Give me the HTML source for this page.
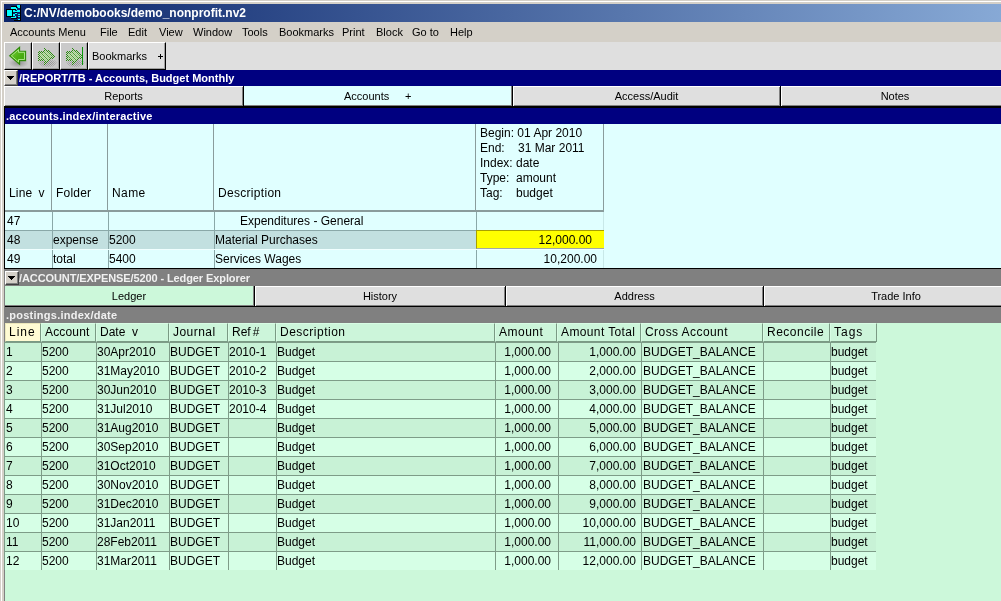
<!DOCTYPE html>
<html><head><meta charset="utf-8">
<style>
*{margin:0;padding:0;box-sizing:border-box}
html,body{width:1001px;height:601px;overflow:hidden;background:#D4D0C8;font-family:"Liberation Sans",sans-serif;position:relative}
.a{position:absolute}
.t{position:absolute;white-space:pre;line-height:1;color:#000;will-change:transform}
</style></head><body>
<div class="a" style="left:1px;top:1px;width:1000px;height:1px;background:#fff"></div>
<div class="a" style="left:1px;top:1px;width:1px;height:600px;background:#fff"></div>
<div class="a" style="left:4px;top:4px;width:1245px;height:18px;background:linear-gradient(to right,#0A246A,#A6CAF0)"></div>
<div class="t" style="left:24px;top:7px;font-size:12px;font-weight:bold;color:#fff">C:/NV/demobooks/demo_nonprofit.nv2</div>
<svg class="a" style="left:4px;top:4px" width="18" height="18" viewBox="0 0 18 18" shape-rendering="crispEdges">
<path fill="#000" d="M2 5h7v8h-7zM7 2h6v1h-6zM12 3h1v3h-1zM9 5h4v1h-4zM8 6h1v7h-1zM11 8h2v2h-2zM7 14h6v1h-6zM13 13h1v1h-1zM16 1h1v16h-1zM10 16h7v1h-7z"/>
<path fill="#0ff" d="M3 6h5v6h-5zM7 3h5v2h-5zM13 1h3v2h-3zM14 3h2v1h-2zM12 4h1v2h-1zM9 6h2v2h-2zM10 7h3v1h-3zM11 9h2v1h-2zM9 10h2v2h-2zM13 6h3v2h-3zM14 10h2v1h-2zM14 12h2v1h-2zM7 13h4v1h-4zM11 12h1v2h-1zM14 15h2v1h-2z"/>
</svg>
<div class="t" style="left:10px;top:27px;font-size:11px">Accounts Menu</div>
<div class="t" style="left:100px;top:27px;font-size:11px">File</div>
<div class="t" style="left:128px;top:27px;font-size:11px">Edit</div>
<div class="t" style="left:159px;top:27px;font-size:11px">View</div>
<div class="t" style="left:193px;top:27px;font-size:11px">Window</div>
<div class="t" style="left:242px;top:27px;font-size:11px">Tools</div>
<div class="t" style="left:279px;top:27px;font-size:11px">Bookmarks</div>
<div class="t" style="left:342px;top:27px;font-size:11px">Print</div>
<div class="t" style="left:376px;top:27px;font-size:11px">Block</div>
<div class="t" style="left:412px;top:27px;font-size:11px">Go to</div>
<div class="t" style="left:450px;top:27px;font-size:11px">Help</div>
<div class="a" style="left:4px;top:42px;width:997px;height:28px;background:#DFDFDF"></div>
<div class="a" style="left:4px;top:42px;width:28px;height:28px;background:#CACACA;border-top:1px solid #fff;border-left:1px solid #fff;border-right:1px solid #000;border-bottom:1px solid #000;box-shadow:inset -1px -1px 0 #a0a0a0"></div>
<div class="a" style="left:32px;top:42px;width:28px;height:28px;background:#CACACA;border-top:1px solid #fff;border-left:1px solid #fff;border-right:1px solid #000;border-bottom:1px solid #000;box-shadow:inset -1px -1px 0 #a0a0a0"></div>
<div class="a" style="left:60px;top:42px;width:28px;height:28px;background:#CACACA;border-top:1px solid #fff;border-left:1px solid #fff;border-right:1px solid #000;border-bottom:1px solid #000;box-shadow:inset -1px -1px 0 #a0a0a0"></div>
<div class="a" style="left:88px;top:42px;width:78px;height:28px;background:#DFDFDF;border-top:1px solid #fff;border-left:1px solid #fff;border-right:1px solid #000;border-bottom:1px solid #000;box-shadow:inset -1px -1px 0 #a0a0a0"></div>
<div class="t" style="left:92px;top:51px;font-size:11px">Bookmarks</div>
<div class="a" style="left:158px;top:56px;width:5px;height:1px;background:#000"></div>
<div class="a" style="left:160px;top:54px;width:1px;height:5px;background:#000"></div>
<svg class="a" style="left:4px;top:42px" width="28" height="28" viewBox="0 0 28 28">
<defs><linearGradient id="ga" x1="0" y1="0" x2="1" y2="1"><stop offset="0" stop-color="#7CD040"/><stop offset=".55" stop-color="#4CB012"/><stop offset="1" stop-color="#3C9C0C"/></linearGradient>
<radialGradient id="sh"><stop offset="0" stop-color="#000" stop-opacity=".28"/><stop offset="1" stop-color="#000" stop-opacity="0"/></radialGradient></defs>
<ellipse cx="14.5" cy="21" rx="10" ry="5" fill="url(#sh)"/>
<path d="M5.6 13.8 L15.6 5.3 L15.6 9.3 L21.6 9.3 L21.6 18.6 L15.6 18.6 L15.6 22.4 Z" fill="url(#ga)" stroke="#2F8A0A" stroke-width="1.1" stroke-linejoin="miter"/>
<path d="M7.4 13.8 L14.5 7.7 L14.5 10.3 L20.5 10.3 L20.5 17.5 L14.5 17.5 L14.5 20 Z" fill="none" stroke="#B0EA90" stroke-width=".9"/>
</svg>
<svg class="a" style="left:32px;top:42px" width="28" height="28" viewBox="0 0 28 28" shape-rendering="crispEdges"><rect x="19" y="17" width="1" height="1" fill="#000" fill-opacity="0.10"/><rect x="18" y="18" width="1" height="1" fill="#000" fill-opacity="0.20"/><rect x="20" y="18" width="1" height="1" fill="#000" fill-opacity="0.15"/><rect x="22" y="18" width="1" height="1" fill="#000" fill-opacity="0.09"/><rect x="7" y="19" width="1" height="1" fill="#000" fill-opacity="0.09"/><rect x="9" y="19" width="1" height="1" fill="#000" fill-opacity="0.17"/><rect x="11" y="19" width="1" height="1" fill="#000" fill-opacity="0.23"/><rect x="17" y="19" width="1" height="1" fill="#000" fill-opacity="0.26"/><rect x="19" y="19" width="1" height="1" fill="#000" fill-opacity="0.23"/><rect x="21" y="19" width="1" height="1" fill="#000" fill-opacity="0.17"/><rect x="23" y="19" width="1" height="1" fill="#000" fill-opacity="0.09"/><rect x="6" y="20" width="1" height="1" fill="#000" fill-opacity="0.07"/><rect x="8" y="20" width="1" height="1" fill="#000" fill-opacity="0.16"/><rect x="10" y="20" width="1" height="1" fill="#000" fill-opacity="0.23"/><rect x="16" y="20" width="1" height="1" fill="#000" fill-opacity="0.29"/><rect x="18" y="20" width="1" height="1" fill="#000" fill-opacity="0.27"/><rect x="20" y="20" width="1" height="1" fill="#000" fill-opacity="0.23"/><rect x="22" y="20" width="1" height="1" fill="#000" fill-opacity="0.16"/><rect x="24" y="20" width="1" height="1" fill="#000" fill-opacity="0.07"/><rect x="7" y="21" width="1" height="1" fill="#000" fill-opacity="0.12"/><rect x="9" y="21" width="1" height="1" fill="#000" fill-opacity="0.20"/><rect x="11" y="21" width="1" height="1" fill="#000" fill-opacity="0.25"/><rect x="15" y="21" width="1" height="1" fill="#000" fill-opacity="0.30"/><rect x="17" y="21" width="1" height="1" fill="#000" fill-opacity="0.29"/><rect x="19" y="21" width="1" height="1" fill="#000" fill-opacity="0.25"/><rect x="21" y="21" width="1" height="1" fill="#000" fill-opacity="0.20"/><rect x="23" y="21" width="1" height="1" fill="#000" fill-opacity="0.12"/><rect x="8" y="22" width="1" height="1" fill="#000" fill-opacity="0.14"/><rect x="10" y="22" width="1" height="1" fill="#000" fill-opacity="0.20"/><rect x="14" y="22" width="1" height="1" fill="#000" fill-opacity="0.27"/><rect x="16" y="22" width="1" height="1" fill="#000" fill-opacity="0.27"/><rect x="18" y="22" width="1" height="1" fill="#000" fill-opacity="0.25"/><rect x="20" y="22" width="1" height="1" fill="#000" fill-opacity="0.20"/><rect x="22" y="22" width="1" height="1" fill="#000" fill-opacity="0.14"/><rect x="9" y="23" width="1" height="1" fill="#000" fill-opacity="0.12"/><rect x="11" y="23" width="1" height="1" fill="#000" fill-opacity="0.18"/><rect x="13" y="23" width="1" height="1" fill="#000" fill-opacity="0.21"/><rect x="15" y="23" width="1" height="1" fill="#000" fill-opacity="0.22"/><rect x="17" y="23" width="1" height="1" fill="#000" fill-opacity="0.21"/><rect x="19" y="23" width="1" height="1" fill="#000" fill-opacity="0.18"/><rect x="21" y="23" width="1" height="1" fill="#000" fill-opacity="0.12"/><rect x="10" y="24" width="1" height="1" fill="#000" fill-opacity="0.08"/><rect x="12" y="24" width="1" height="1" fill="#000" fill-opacity="0.12"/><rect x="14" y="24" width="1" height="1" fill="#000" fill-opacity="0.15"/><rect x="16" y="24" width="1" height="1" fill="#000" fill-opacity="0.15"/><rect x="18" y="24" width="1" height="1" fill="#000" fill-opacity="0.12"/><rect x="20" y="24" width="1" height="1" fill="#000" fill-opacity="0.08"/><rect x="12" y="6" width="1" height="1" fill="#2C8C10"/><rect x="13" y="7" width="1" height="1" fill="#2C8C10"/><rect x="12" y="8" width="1" height="1" fill="#2C8C10"/><rect x="14" y="8" width="1" height="1" fill="#2C8C10"/><rect x="16" y="8" width="1" height="1" fill="#2C8C10"/><rect x="7" y="9" width="1" height="1" fill="#2C8C10"/><rect x="9" y="9" width="1" height="1" fill="#2C8C10"/><rect x="11" y="9" width="1" height="1" fill="#2C8C10"/><rect x="13" y="9" width="1" height="1" fill="#98E070"/><rect x="15" y="9" width="1" height="1" fill="#2C8C10"/><rect x="17" y="9" width="1" height="1" fill="#2C8C10"/><rect x="6" y="10" width="1" height="1" fill="#2C8C10"/><rect x="8" y="10" width="1" height="1" fill="#2C8C10"/><rect x="10" y="10" width="1" height="1" fill="#2C8C10"/><rect x="12" y="10" width="1" height="1" fill="#4AB02A"/><rect x="14" y="10" width="1" height="1" fill="#98E070"/><rect x="16" y="10" width="1" height="1" fill="#4AB02A"/><rect x="18" y="10" width="1" height="1" fill="#2C8C10"/><rect x="7" y="11" width="1" height="1" fill="#2C8C10"/><rect x="9" y="11" width="1" height="1" fill="#4AB02A"/><rect x="11" y="11" width="1" height="1" fill="#98E070"/><rect x="13" y="11" width="1" height="1" fill="#4AB02A"/><rect x="15" y="11" width="1" height="1" fill="#98E070"/><rect x="17" y="11" width="1" height="1" fill="#4AB02A"/><rect x="19" y="11" width="1" height="1" fill="#2C8C10"/><rect x="6" y="12" width="1" height="1" fill="#2C8C10"/><rect x="8" y="12" width="1" height="1" fill="#98E070"/><rect x="10" y="12" width="1" height="1" fill="#4AB02A"/><rect x="12" y="12" width="1" height="1" fill="#98E070"/><rect x="14" y="12" width="1" height="1" fill="#4AB02A"/><rect x="16" y="12" width="1" height="1" fill="#98E070"/><rect x="18" y="12" width="1" height="1" fill="#4AB02A"/><rect x="20" y="12" width="1" height="1" fill="#2C8C10"/><rect x="7" y="13" width="1" height="1" fill="#2C8C10"/><rect x="9" y="13" width="1" height="1" fill="#98E070"/><rect x="11" y="13" width="1" height="1" fill="#4AB02A"/><rect x="13" y="13" width="1" height="1" fill="#98E070"/><rect x="15" y="13" width="1" height="1" fill="#4AB02A"/><rect x="17" y="13" width="1" height="1" fill="#98E070"/><rect x="19" y="13" width="1" height="1" fill="#4AB02A"/><rect x="21" y="13" width="1" height="1" fill="#2C8C10"/><rect x="6" y="14" width="1" height="1" fill="#2C8C10"/><rect x="8" y="14" width="1" height="1" fill="#4AB02A"/><rect x="10" y="14" width="1" height="1" fill="#98E070"/><rect x="12" y="14" width="1" height="1" fill="#4AB02A"/><rect x="14" y="14" width="1" height="1" fill="#98E070"/><rect x="16" y="14" width="1" height="1" fill="#4AB02A"/><rect x="18" y="14" width="1" height="1" fill="#98E070"/><rect x="20" y="14" width="1" height="1" fill="#4AB02A"/><rect x="22" y="14" width="1" height="1" fill="#2C8C10"/><rect x="7" y="15" width="1" height="1" fill="#2C8C10"/><rect x="9" y="15" width="1" height="1" fill="#4AB02A"/><rect x="11" y="15" width="1" height="1" fill="#98E070"/><rect x="13" y="15" width="1" height="1" fill="#4AB02A"/><rect x="15" y="15" width="1" height="1" fill="#98E070"/><rect x="17" y="15" width="1" height="1" fill="#4AB02A"/><rect x="19" y="15" width="1" height="1" fill="#2C8C10"/><rect x="21" y="15" width="1" height="1" fill="#2C8C10"/><rect x="6" y="16" width="1" height="1" fill="#2C8C10"/><rect x="8" y="16" width="1" height="1" fill="#98E070"/><rect x="10" y="16" width="1" height="1" fill="#4AB02A"/><rect x="12" y="16" width="1" height="1" fill="#98E070"/><rect x="14" y="16" width="1" height="1" fill="#4AB02A"/><rect x="16" y="16" width="1" height="1" fill="#98E070"/><rect x="18" y="16" width="1" height="1" fill="#2C8C10"/><rect x="20" y="16" width="1" height="1" fill="#2C8C10"/><rect x="7" y="17" width="1" height="1" fill="#2C8C10"/><rect x="9" y="17" width="1" height="1" fill="#2C8C10"/><rect x="11" y="17" width="1" height="1" fill="#2C8C10"/><rect x="13" y="17" width="1" height="1" fill="#98E070"/><rect x="15" y="17" width="1" height="1" fill="#4AB02A"/><rect x="17" y="17" width="1" height="1" fill="#2C8C10"/><rect x="6" y="18" width="1" height="1" fill="#2C8C10"/><rect x="8" y="18" width="1" height="1" fill="#2C8C10"/><rect x="10" y="18" width="1" height="1" fill="#2C8C10"/><rect x="12" y="18" width="1" height="1" fill="#4AB02A"/><rect x="14" y="18" width="1" height="1" fill="#98E070"/><rect x="16" y="18" width="1" height="1" fill="#2C8C10"/><rect x="13" y="19" width="1" height="1" fill="#2C8C10"/><rect x="15" y="19" width="1" height="1" fill="#2C8C10"/><rect x="12" y="20" width="1" height="1" fill="#2C8C10"/><rect x="14" y="20" width="1" height="1" fill="#2C8C10"/><rect x="13" y="21" width="1" height="1" fill="#2C8C10"/><rect x="12" y="22" width="1" height="1" fill="#2C8C10"/></svg>
<svg class="a" style="left:60px;top:42px" width="28" height="28" viewBox="0 0 28 28" shape-rendering="crispEdges"><rect x="19" y="17" width="1" height="1" fill="#000" fill-opacity="0.10"/><rect x="18" y="18" width="1" height="1" fill="#000" fill-opacity="0.20"/><rect x="20" y="18" width="1" height="1" fill="#000" fill-opacity="0.15"/><rect x="22" y="18" width="1" height="1" fill="#000" fill-opacity="0.09"/><rect x="7" y="19" width="1" height="1" fill="#000" fill-opacity="0.09"/><rect x="9" y="19" width="1" height="1" fill="#000" fill-opacity="0.17"/><rect x="11" y="19" width="1" height="1" fill="#000" fill-opacity="0.23"/><rect x="17" y="19" width="1" height="1" fill="#000" fill-opacity="0.26"/><rect x="19" y="19" width="1" height="1" fill="#000" fill-opacity="0.23"/><rect x="21" y="19" width="1" height="1" fill="#000" fill-opacity="0.17"/><rect x="23" y="19" width="1" height="1" fill="#000" fill-opacity="0.09"/><rect x="6" y="20" width="1" height="1" fill="#000" fill-opacity="0.07"/><rect x="8" y="20" width="1" height="1" fill="#000" fill-opacity="0.16"/><rect x="10" y="20" width="1" height="1" fill="#000" fill-opacity="0.23"/><rect x="16" y="20" width="1" height="1" fill="#000" fill-opacity="0.29"/><rect x="18" y="20" width="1" height="1" fill="#000" fill-opacity="0.27"/><rect x="20" y="20" width="1" height="1" fill="#000" fill-opacity="0.23"/><rect x="22" y="20" width="1" height="1" fill="#000" fill-opacity="0.16"/><rect x="24" y="20" width="1" height="1" fill="#000" fill-opacity="0.07"/><rect x="7" y="21" width="1" height="1" fill="#000" fill-opacity="0.12"/><rect x="9" y="21" width="1" height="1" fill="#000" fill-opacity="0.20"/><rect x="11" y="21" width="1" height="1" fill="#000" fill-opacity="0.25"/><rect x="15" y="21" width="1" height="1" fill="#000" fill-opacity="0.30"/><rect x="17" y="21" width="1" height="1" fill="#000" fill-opacity="0.29"/><rect x="19" y="21" width="1" height="1" fill="#000" fill-opacity="0.25"/><rect x="21" y="21" width="1" height="1" fill="#000" fill-opacity="0.20"/><rect x="23" y="21" width="1" height="1" fill="#000" fill-opacity="0.12"/><rect x="8" y="22" width="1" height="1" fill="#000" fill-opacity="0.14"/><rect x="10" y="22" width="1" height="1" fill="#000" fill-opacity="0.20"/><rect x="14" y="22" width="1" height="1" fill="#000" fill-opacity="0.27"/><rect x="16" y="22" width="1" height="1" fill="#000" fill-opacity="0.27"/><rect x="18" y="22" width="1" height="1" fill="#000" fill-opacity="0.25"/><rect x="20" y="22" width="1" height="1" fill="#000" fill-opacity="0.20"/><rect x="22" y="22" width="1" height="1" fill="#000" fill-opacity="0.14"/><rect x="9" y="23" width="1" height="1" fill="#000" fill-opacity="0.12"/><rect x="11" y="23" width="1" height="1" fill="#000" fill-opacity="0.18"/><rect x="13" y="23" width="1" height="1" fill="#000" fill-opacity="0.21"/><rect x="15" y="23" width="1" height="1" fill="#000" fill-opacity="0.22"/><rect x="17" y="23" width="1" height="1" fill="#000" fill-opacity="0.21"/><rect x="19" y="23" width="1" height="1" fill="#000" fill-opacity="0.18"/><rect x="21" y="23" width="1" height="1" fill="#000" fill-opacity="0.12"/><rect x="10" y="24" width="1" height="1" fill="#000" fill-opacity="0.08"/><rect x="12" y="24" width="1" height="1" fill="#000" fill-opacity="0.12"/><rect x="14" y="24" width="1" height="1" fill="#000" fill-opacity="0.15"/><rect x="16" y="24" width="1" height="1" fill="#000" fill-opacity="0.15"/><rect x="18" y="24" width="1" height="1" fill="#000" fill-opacity="0.12"/><rect x="20" y="24" width="1" height="1" fill="#000" fill-opacity="0.08"/><rect x="12" y="6" width="1" height="1" fill="#2C8C10"/><rect x="13" y="7" width="1" height="1" fill="#2C8C10"/><rect x="12" y="8" width="1" height="1" fill="#2C8C10"/><rect x="14" y="8" width="1" height="1" fill="#2C8C10"/><rect x="16" y="8" width="1" height="1" fill="#2C8C10"/><rect x="7" y="9" width="1" height="1" fill="#2C8C10"/><rect x="9" y="9" width="1" height="1" fill="#2C8C10"/><rect x="11" y="9" width="1" height="1" fill="#2C8C10"/><rect x="13" y="9" width="1" height="1" fill="#98E070"/><rect x="15" y="9" width="1" height="1" fill="#2C8C10"/><rect x="17" y="9" width="1" height="1" fill="#2C8C10"/><rect x="6" y="10" width="1" height="1" fill="#2C8C10"/><rect x="8" y="10" width="1" height="1" fill="#2C8C10"/><rect x="10" y="10" width="1" height="1" fill="#2C8C10"/><rect x="12" y="10" width="1" height="1" fill="#4AB02A"/><rect x="14" y="10" width="1" height="1" fill="#98E070"/><rect x="16" y="10" width="1" height="1" fill="#4AB02A"/><rect x="18" y="10" width="1" height="1" fill="#2C8C10"/><rect x="7" y="11" width="1" height="1" fill="#2C8C10"/><rect x="9" y="11" width="1" height="1" fill="#4AB02A"/><rect x="11" y="11" width="1" height="1" fill="#98E070"/><rect x="13" y="11" width="1" height="1" fill="#4AB02A"/><rect x="15" y="11" width="1" height="1" fill="#98E070"/><rect x="17" y="11" width="1" height="1" fill="#4AB02A"/><rect x="19" y="11" width="1" height="1" fill="#2C8C10"/><rect x="6" y="12" width="1" height="1" fill="#2C8C10"/><rect x="8" y="12" width="1" height="1" fill="#98E070"/><rect x="10" y="12" width="1" height="1" fill="#4AB02A"/><rect x="12" y="12" width="1" height="1" fill="#98E070"/><rect x="14" y="12" width="1" height="1" fill="#4AB02A"/><rect x="16" y="12" width="1" height="1" fill="#98E070"/><rect x="18" y="12" width="1" height="1" fill="#4AB02A"/><rect x="20" y="12" width="1" height="1" fill="#2C8C10"/><rect x="7" y="13" width="1" height="1" fill="#2C8C10"/><rect x="9" y="13" width="1" height="1" fill="#98E070"/><rect x="11" y="13" width="1" height="1" fill="#4AB02A"/><rect x="13" y="13" width="1" height="1" fill="#98E070"/><rect x="15" y="13" width="1" height="1" fill="#4AB02A"/><rect x="17" y="13" width="1" height="1" fill="#98E070"/><rect x="19" y="13" width="1" height="1" fill="#4AB02A"/><rect x="21" y="13" width="1" height="1" fill="#2C8C10"/><rect x="6" y="14" width="1" height="1" fill="#2C8C10"/><rect x="8" y="14" width="1" height="1" fill="#4AB02A"/><rect x="10" y="14" width="1" height="1" fill="#98E070"/><rect x="12" y="14" width="1" height="1" fill="#4AB02A"/><rect x="14" y="14" width="1" height="1" fill="#98E070"/><rect x="16" y="14" width="1" height="1" fill="#4AB02A"/><rect x="18" y="14" width="1" height="1" fill="#98E070"/><rect x="20" y="14" width="1" height="1" fill="#4AB02A"/><rect x="22" y="14" width="1" height="1" fill="#2C8C10"/><rect x="7" y="15" width="1" height="1" fill="#2C8C10"/><rect x="9" y="15" width="1" height="1" fill="#4AB02A"/><rect x="11" y="15" width="1" height="1" fill="#98E070"/><rect x="13" y="15" width="1" height="1" fill="#4AB02A"/><rect x="15" y="15" width="1" height="1" fill="#98E070"/><rect x="17" y="15" width="1" height="1" fill="#4AB02A"/><rect x="19" y="15" width="1" height="1" fill="#2C8C10"/><rect x="21" y="15" width="1" height="1" fill="#2C8C10"/><rect x="6" y="16" width="1" height="1" fill="#2C8C10"/><rect x="8" y="16" width="1" height="1" fill="#98E070"/><rect x="10" y="16" width="1" height="1" fill="#4AB02A"/><rect x="12" y="16" width="1" height="1" fill="#98E070"/><rect x="14" y="16" width="1" height="1" fill="#4AB02A"/><rect x="16" y="16" width="1" height="1" fill="#98E070"/><rect x="18" y="16" width="1" height="1" fill="#2C8C10"/><rect x="20" y="16" width="1" height="1" fill="#2C8C10"/><rect x="7" y="17" width="1" height="1" fill="#2C8C10"/><rect x="9" y="17" width="1" height="1" fill="#2C8C10"/><rect x="11" y="17" width="1" height="1" fill="#2C8C10"/><rect x="13" y="17" width="1" height="1" fill="#98E070"/><rect x="15" y="17" width="1" height="1" fill="#4AB02A"/><rect x="17" y="17" width="1" height="1" fill="#2C8C10"/><rect x="6" y="18" width="1" height="1" fill="#2C8C10"/><rect x="8" y="18" width="1" height="1" fill="#2C8C10"/><rect x="10" y="18" width="1" height="1" fill="#2C8C10"/><rect x="12" y="18" width="1" height="1" fill="#4AB02A"/><rect x="14" y="18" width="1" height="1" fill="#98E070"/><rect x="16" y="18" width="1" height="1" fill="#2C8C10"/><rect x="13" y="19" width="1" height="1" fill="#2C8C10"/><rect x="15" y="19" width="1" height="1" fill="#2C8C10"/><rect x="12" y="20" width="1" height="1" fill="#2C8C10"/><rect x="14" y="20" width="1" height="1" fill="#2C8C10"/><rect x="13" y="21" width="1" height="1" fill="#2C8C10"/><rect x="12" y="22" width="1" height="1" fill="#2C8C10"/><rect x="22" y="5" width="1" height="18" fill="#0A960A"/></svg>
<div class="a" style="left:4px;top:70px;width:997px;height:16px;background:#000080"></div>
<div class="a" style="left:4px;top:70px;width:14px;height:16px;background:#D4D0C8;border-top:1px solid #fff;border-left:1px solid #fff;border-right:1px solid #404040;border-bottom:1px solid #404040;box-shadow:inset -1px -1px 0 #808080"></div>
<svg class="a" style="left:7px;top:76px" width="7" height="4" shape-rendering="crispEdges"><path d="M0 0h7v1h-1v1h-1v1h-1v1h-1v-1h-1v-1h-1v-1h-1z" fill="#000"/></svg>
<div class="t" style="left:19px;top:73px;font-size:11px;font-weight:bold;color:#fff">/REPORT/TB - Accounts, Budget Monthly</div>
<div class="a" style="left:4px;top:86px;width:997px;height:22px;background:#000"></div>
<div class="a" style="left:4px;top:86px;width:239px;height:20px;background:#DFDFDF;border-top:1px solid #fff;border-left:1px solid #fff;box-shadow:inset -1px -1px 0 #808080"></div>
<div class="t" style="left:4px;top:91px;width:239px;text-align:center;font-size:11px">Reports</div>
<div class="a" style="left:244px;top:86px;width:268px;height:20px;background:#E0FFFF;box-shadow:inset -1px -1px 0 #808080"></div>
<div class="t" style="left:344px;top:91px;font-size:11px">Accounts</div>
<div class="t" style="left:405px;top:91px;font-size:11px">+</div>
<div class="a" style="left:513px;top:86px;width:267px;height:20px;background:#DFDFDF;border-top:1px solid #fff;border-left:1px solid #fff;box-shadow:inset -1px -1px 0 #808080"></div>
<div class="t" style="left:513px;top:91px;width:267px;text-align:center;font-size:11px">Access/Audit</div>
<div class="a" style="left:781px;top:86px;width:228px;height:20px;background:#DFDFDF;border-top:1px solid #fff;border-left:1px solid #fff;box-shadow:inset -1px -1px 0 #808080"></div>
<div class="t" style="left:781px;top:91px;width:228px;text-align:center;font-size:11px">Notes</div>
<div class="a" style="left:4px;top:108px;width:997px;height:16px;background:#000080"></div>
<div class="t" style="left:6px;top:111px;font-size:11px;font-weight:bold;color:#fff;letter-spacing:0.2px">.accounts.index/interactive</div>
<div class="a" style="left:4px;top:124px;width:997px;height:145px;background:#E0FFFF"></div>
<div class="a" style="left:4px;top:106px;width:1px;height:163px;background:#000"></div>
<div class="a" style="left:5px;top:124px;width:47px;height:88px;border-right:1px solid #8A9C9C;border-bottom:2px solid #8A9C9C"></div>
<div class="a" style="left:52px;top:124px;width:56px;height:88px;border-right:1px solid #8A9C9C;border-bottom:2px solid #8A9C9C"></div>
<div class="a" style="left:108px;top:124px;width:106px;height:88px;border-right:1px solid #8A9C9C;border-bottom:2px solid #8A9C9C"></div>
<div class="a" style="left:214px;top:124px;width:262px;height:88px;border-right:1px solid #8A9C9C;border-bottom:2px solid #8A9C9C"></div>
<div class="a" style="left:476px;top:124px;width:128px;height:88px;border-right:1px solid #8A9C9C;border-bottom:2px solid #8A9C9C"></div>
<div class="t" style="left:9px;top:187px;font-size:12px;letter-spacing:0.2px">Line <span style="margin-left:2.4px">v</span></div>
<div class="t" style="left:56px;top:187px;font-size:12px;letter-spacing:0.2px">Folder</div>
<div class="t" style="left:112px;top:187px;font-size:12px;letter-spacing:0.4px">Name</div>
<div class="t" style="left:218px;top:187px;font-size:12px;letter-spacing:0.3px">Description</div>
<div class="t" style="left:480px;top:127px;font-size:12px">Begin: 01 Apr 2010</div>
<div class="t" style="left:480px;top:142px;font-size:12px">End: &nbsp;&nbsp;&nbsp;31 Mar 2011</div>
<div class="t" style="left:480px;top:157px;font-size:12px">Index: date</div>
<div class="t" style="left:480px;top:172px;font-size:12px">Type: &nbsp;amount</div>
<div class="t" style="left:480px;top:187px;font-size:12px">Tag: &nbsp;&nbsp;&nbsp;budget</div>
<div class="a" style="left:5px;top:212px;width:48px;height:19px;background:#E0FFFF;border-right:1px solid #8AA8A8;border-bottom:1px solid #8AA8A8"></div>
<div class="a" style="left:53px;top:212px;width:56px;height:19px;background:#E0FFFF;border-right:1px solid #8AA8A8;border-bottom:1px solid #8AA8A8"></div>
<div class="a" style="left:109px;top:212px;width:106px;height:19px;background:#E0FFFF;border-right:1px solid #8AA8A8;border-bottom:1px solid #8AA8A8"></div>
<div class="a" style="left:215px;top:212px;width:262px;height:19px;background:#E0FFFF;border-right:1px solid #8AA8A8;border-bottom:1px solid #8AA8A8"></div>
<div class="a" style="left:477px;top:212px;width:127px;height:19px;background:#E0FFFF;border-right:1px solid #C8E8E8;border-bottom:1px solid #8AA8A8"></div>
<div class="a" style="left:5px;top:231px;width:48px;height:19px;background:#C2E0E0;border-right:1px solid #8AA8A8;border-bottom:1px solid #8AA8A8"></div>
<div class="a" style="left:53px;top:231px;width:56px;height:19px;background:#C2E0E0;border-right:1px solid #8AA8A8;border-bottom:1px solid #8AA8A8"></div>
<div class="a" style="left:109px;top:231px;width:106px;height:19px;background:#C2E0E0;border-right:1px solid #8AA8A8;border-bottom:1px solid #8AA8A8"></div>
<div class="a" style="left:215px;top:231px;width:262px;height:19px;background:#C2E0E0;border-right:1px solid #8AA8A8;border-bottom:1px solid #8AA8A8"></div>
<div class="a" style="left:477px;top:231px;width:127px;height:19px;background:#C2E0E0;border-right:1px solid #C8E8E8;border-bottom:1px solid #8AA8A8"></div>
<div class="a" style="left:5px;top:250px;width:48px;height:19px;background:#E0FFFF;border-right:1px solid #8AA8A8;border-bottom:1px solid #8AA8A8"></div>
<div class="a" style="left:53px;top:250px;width:56px;height:19px;background:#E0FFFF;border-right:1px solid #8AA8A8;border-bottom:1px solid #8AA8A8"></div>
<div class="a" style="left:109px;top:250px;width:106px;height:19px;background:#E0FFFF;border-right:1px solid #8AA8A8;border-bottom:1px solid #8AA8A8"></div>
<div class="a" style="left:215px;top:250px;width:262px;height:19px;background:#E0FFFF;border-right:1px solid #8AA8A8;border-bottom:1px solid #8AA8A8"></div>
<div class="a" style="left:477px;top:250px;width:127px;height:19px;background:#E0FFFF;border-right:1px solid #C8E8E8;border-bottom:1px solid #8AA8A8"></div>
<div class="a" style="left:5px;top:249px;width:599px;height:1px;background:#F0FFFF"></div>
<div class="a" style="left:4px;top:268px;width:997px;height:1px;background:#000"></div>
<div class="a" style="left:476px;top:230px;width:128px;height:19px;background:#FFFF00;border-top:1px solid #A8A000;border-left:1px solid #A8A000;border-bottom:1px solid #A0A8A8"></div>
<div class="t" style="left:7px;top:215px;font-size:12px">47</div>
<div class="t" style="left:240px;top:215px;font-size:12px">Expenditures - General</div>
<div class="t" style="left:7px;top:234px;font-size:12px">48</div>
<div class="t" style="left:53px;top:234px;font-size:12px">expense</div>
<div class="t" style="left:109px;top:234px;font-size:12px">5200</div>
<div class="t" style="left:215px;top:234px;font-size:12px">Material Purchases</div>
<div class="t" style="left:392px;top:234px;width:200px;text-align:right;font-size:12px">12,000.00</div>
<div class="t" style="left:7px;top:253px;font-size:12px">49</div>
<div class="t" style="left:53px;top:253px;font-size:12px">total</div>
<div class="t" style="left:109px;top:253px;font-size:12px">5400</div>
<div class="t" style="left:215px;top:253px;font-size:12px">Services Wages</div>
<div class="t" style="left:397px;top:253px;width:200px;text-align:right;font-size:12px">10,200.00</div>
<div class="a" style="left:4px;top:269px;width:997px;height:17px;background:#808080"></div>
<div class="a" style="left:5px;top:271px;width:14px;height:14px;background:#D4D0C8;border-top:1px solid #fff;border-left:1px solid #fff;border-right:1px solid #404040;border-bottom:1px solid #404040;box-shadow:inset -1px -1px 0 #808080"></div>
<svg class="a" style="left:8px;top:276px" width="7" height="4" shape-rendering="crispEdges"><path d="M0 0h7v1h-1v1h-1v1h-1v1h-1v-1h-1v-1h-1v-1h-1z" fill="#000"/></svg>
<div class="t" style="left:19px;top:273px;font-size:11px;font-weight:bold;color:#F0F0F0;letter-spacing:-0.1px">/ACCOUNT/EXPENSE/5200 - Ledger Explorer</div>
<div class="a" style="left:4px;top:286px;width:997px;height:21px;background:#000"></div>
<div class="a" style="left:4px;top:286px;width:250px;height:20px;background:#CCF8DA;box-shadow:inset -1px -1px 0 #808080"></div>
<div class="t" style="left:4px;top:291px;width:250px;text-align:center;font-size:11px">Ledger</div>
<div class="a" style="left:255px;top:286px;width:250px;height:20px;background:#DFDFDF;border-top:1px solid #fff;border-left:1px solid #fff;box-shadow:inset -1px -1px 0 #808080"></div>
<div class="t" style="left:255px;top:291px;width:250px;text-align:center;font-size:11px">History</div>
<div class="a" style="left:506px;top:286px;width:257px;height:20px;background:#DFDFDF;border-top:1px solid #fff;border-left:1px solid #fff;box-shadow:inset -1px -1px 0 #808080"></div>
<div class="t" style="left:506px;top:291px;width:257px;text-align:center;font-size:11px">Address</div>
<div class="a" style="left:764px;top:286px;width:264px;height:20px;background:#DFDFDF;border-top:1px solid #fff;border-left:1px solid #fff;box-shadow:inset -1px -1px 0 #808080"></div>
<div class="t" style="left:764px;top:291px;width:264px;text-align:center;font-size:11px">Trade Info</div>
<div class="a" style="left:4px;top:286px;width:1px;height:21px;background:#808080"></div>
<div class="a" style="left:4px;top:307px;width:997px;height:16px;background:#808080"></div>
<div class="t" style="left:6px;top:310px;font-size:11px;font-weight:bold;color:#F0F0F0;letter-spacing:0.25px">.postings.index/date</div>
<div class="a" style="left:4px;top:323px;width:997px;height:278px;background:#CCF8DA"></div>
<div class="a" style="left:4px;top:323px;width:1px;height:278px;background:#808080"></div>
<div class="a" style="left:5px;top:323px;width:36px;height:19px;background:#FFFBD4;border-top:1px solid #ECE8BC;border-left:1px solid #ECE8BC;border-right:1px solid #7A9A84;border-bottom:1px solid #7A9A84"></div>
<div class="t" style="left:9px;top:326px;font-size:12px;letter-spacing:1.0px">Line</div>
<div class="a" style="left:41px;top:323px;width:55px;height:19px;background:#CCF5DA;border-top:1px solid #D8FCE4;border-left:1px solid #D8FCE4;border-right:1px solid #7A9A84;border-bottom:1px solid #7A9A84"></div>
<div class="t" style="left:45px;top:326px;font-size:12px;letter-spacing:0.17px">Account</div>
<div class="a" style="left:96px;top:323px;width:73px;height:19px;background:#CCF5DA;border-top:1px solid #D8FCE4;border-left:1px solid #D8FCE4;border-right:1px solid #7A9A84;border-bottom:1px solid #7A9A84"></div>
<div class="t" style="left:100px;top:326px;font-size:12px;letter-spacing:0px">Date &nbsp;v</div>
<div class="a" style="left:169px;top:323px;width:59px;height:19px;background:#CCF5DA;border-top:1px solid #D8FCE4;border-left:1px solid #D8FCE4;border-right:1px solid #7A9A84;border-bottom:1px solid #7A9A84"></div>
<div class="t" style="left:173px;top:326px;font-size:12px;letter-spacing:0.45px">Journal</div>
<div class="a" style="left:228px;top:323px;width:48px;height:19px;background:#CCF5DA;border-top:1px solid #D8FCE4;border-left:1px solid #D8FCE4;border-right:1px solid #7A9A84;border-bottom:1px solid #7A9A84"></div>
<div class="t" style="left:232px;top:326px;font-size:12px;letter-spacing:0px">Ref<span style="margin-left:2px">#</span></div>
<div class="a" style="left:276px;top:323px;width:219px;height:19px;background:#CCF5DA;border-top:1px solid #D8FCE4;border-left:1px solid #D8FCE4;border-right:1px solid #7A9A84;border-bottom:1px solid #7A9A84"></div>
<div class="t" style="left:280px;top:326px;font-size:12px;letter-spacing:0.5px">Description</div>
<div class="a" style="left:495px;top:323px;width:62px;height:19px;background:#CCF5DA;border-top:1px solid #D8FCE4;border-left:1px solid #D8FCE4;border-right:1px solid #7A9A84;border-bottom:1px solid #7A9A84"></div>
<div class="t" style="left:499px;top:326px;font-size:12px;letter-spacing:0.5px">Amount</div>
<div class="a" style="left:557px;top:323px;width:84px;height:19px;background:#CCF5DA;border-top:1px solid #D8FCE4;border-left:1px solid #D8FCE4;border-right:1px solid #7A9A84;border-bottom:1px solid #7A9A84"></div>
<div class="t" style="left:561px;top:326px;font-size:12px;letter-spacing:0.38px">Amount Total</div>
<div class="a" style="left:641px;top:323px;width:122px;height:19px;background:#CCF5DA;border-top:1px solid #D8FCE4;border-left:1px solid #D8FCE4;border-right:1px solid #7A9A84;border-bottom:1px solid #7A9A84"></div>
<div class="t" style="left:645px;top:326px;font-size:12px;letter-spacing:0.43px">Cross Account</div>
<div class="a" style="left:763px;top:323px;width:67px;height:19px;background:#CCF5DA;border-top:1px solid #D8FCE4;border-left:1px solid #D8FCE4;border-right:1px solid #7A9A84;border-bottom:1px solid #7A9A84"></div>
<div class="t" style="left:767px;top:326px;font-size:12px;letter-spacing:0.5px">Reconcile</div>
<div class="a" style="left:830px;top:323px;width:47px;height:19px;background:#CCF5DA;border-top:1px solid #D8FCE4;border-left:1px solid #D8FCE4;border-right:1px solid #7A9A84;border-bottom:1px solid #7A9A84"></div>
<div class="t" style="left:834px;top:326px;font-size:12px;letter-spacing:1.0px">Tags</div>
<div class="a" style="left:4px;top:342px;width:37px;height:19px;background:#C8F2D6;border-left:1px solid #7E9C88;border-top:1px solid #7E9C88"></div>
<div class="a" style="left:41px;top:342px;width:55px;height:19px;background:#C8F2D6;border-left:1px solid #7E9C88;border-top:1px solid #7E9C88"></div>
<div class="a" style="left:96px;top:342px;width:73px;height:19px;background:#C8F2D6;border-left:1px solid #7E9C88;border-top:1px solid #7E9C88"></div>
<div class="a" style="left:169px;top:342px;width:59px;height:19px;background:#C8F2D6;border-left:1px solid #7E9C88;border-top:1px solid #7E9C88"></div>
<div class="a" style="left:228px;top:342px;width:48px;height:19px;background:#C8F2D6;border-left:1px solid #7E9C88;border-top:1px solid #7E9C88"></div>
<div class="a" style="left:276px;top:342px;width:219px;height:19px;background:#C8F2D6;border-left:1px solid #7E9C88;border-top:1px solid #7E9C88"></div>
<div class="a" style="left:495px;top:342px;width:63px;height:19px;background:#C8F2D6;border-left:1px solid #7E9C88;border-top:1px solid #7E9C88"></div>
<div class="a" style="left:558px;top:342px;width:83px;height:19px;background:#C8F2D6;border-left:1px solid #7E9C88;border-top:1px solid #7E9C88"></div>
<div class="a" style="left:641px;top:342px;width:122px;height:19px;background:#C8F2D6;border-left:1px solid #7E9C88;border-top:1px solid #7E9C88"></div>
<div class="a" style="left:763px;top:342px;width:67px;height:19px;background:#C8F2D6;border-left:1px solid #7E9C88;border-top:1px solid #7E9C88"></div>
<div class="a" style="left:830px;top:342px;width:46px;height:19px;background:#C8F2D6;border-left:1px solid #7E9C88;border-top:1px solid #7E9C88"></div>
<div class="t" style="left:6px;top:346px;font-size:12px">1</div>
<div class="t" style="left:42px;top:346px;font-size:12px">5200</div>
<div class="t" style="left:97px;top:346px;font-size:12px">30Apr2010</div>
<div class="t" style="left:170px;top:346px;font-size:12px">BUDGET</div>
<div class="t" style="left:229px;top:346px;font-size:12px">2010-1</div>
<div class="t" style="left:277px;top:346px;font-size:12px">Budget</div>
<div class="t" style="left:351px;top:346px;width:200px;text-align:right;font-size:12px">1,000.00</div>
<div class="t" style="left:436px;top:346px;width:200px;text-align:right;font-size:12px">1,000.00</div>
<div class="t" style="left:643px;top:346px;font-size:12px">BUDGET_BALANCE</div>
<div class="t" style="left:831px;top:346px;font-size:12px">budget</div>
<div class="a" style="left:4px;top:361px;width:37px;height:19px;background:#D6FFE6;border-left:1px solid #7E9C88;border-top:1px solid #7E9C88"></div>
<div class="a" style="left:41px;top:361px;width:55px;height:19px;background:#D6FFE6;border-left:1px solid #7E9C88;border-top:1px solid #7E9C88"></div>
<div class="a" style="left:96px;top:361px;width:73px;height:19px;background:#D6FFE6;border-left:1px solid #7E9C88;border-top:1px solid #7E9C88"></div>
<div class="a" style="left:169px;top:361px;width:59px;height:19px;background:#D6FFE6;border-left:1px solid #7E9C88;border-top:1px solid #7E9C88"></div>
<div class="a" style="left:228px;top:361px;width:48px;height:19px;background:#D6FFE6;border-left:1px solid #7E9C88;border-top:1px solid #7E9C88"></div>
<div class="a" style="left:276px;top:361px;width:219px;height:19px;background:#D6FFE6;border-left:1px solid #7E9C88;border-top:1px solid #7E9C88"></div>
<div class="a" style="left:495px;top:361px;width:63px;height:19px;background:#D6FFE6;border-left:1px solid #7E9C88;border-top:1px solid #7E9C88"></div>
<div class="a" style="left:558px;top:361px;width:83px;height:19px;background:#D6FFE6;border-left:1px solid #7E9C88;border-top:1px solid #7E9C88"></div>
<div class="a" style="left:641px;top:361px;width:122px;height:19px;background:#D6FFE6;border-left:1px solid #7E9C88;border-top:1px solid #7E9C88"></div>
<div class="a" style="left:763px;top:361px;width:67px;height:19px;background:#D6FFE6;border-left:1px solid #7E9C88;border-top:1px solid #7E9C88"></div>
<div class="a" style="left:830px;top:361px;width:46px;height:19px;background:#D6FFE6;border-left:1px solid #7E9C88;border-top:1px solid #7E9C88"></div>
<div class="t" style="left:6px;top:365px;font-size:12px">2</div>
<div class="t" style="left:42px;top:365px;font-size:12px">5200</div>
<div class="t" style="left:97px;top:365px;font-size:12px">31May2010</div>
<div class="t" style="left:170px;top:365px;font-size:12px">BUDGET</div>
<div class="t" style="left:229px;top:365px;font-size:12px">2010-2</div>
<div class="t" style="left:277px;top:365px;font-size:12px">Budget</div>
<div class="t" style="left:351px;top:365px;width:200px;text-align:right;font-size:12px">1,000.00</div>
<div class="t" style="left:436px;top:365px;width:200px;text-align:right;font-size:12px">2,000.00</div>
<div class="t" style="left:643px;top:365px;font-size:12px">BUDGET_BALANCE</div>
<div class="t" style="left:831px;top:365px;font-size:12px">budget</div>
<div class="a" style="left:4px;top:380px;width:37px;height:19px;background:#C8F2D6;border-left:1px solid #7E9C88;border-top:1px solid #7E9C88"></div>
<div class="a" style="left:41px;top:380px;width:55px;height:19px;background:#C8F2D6;border-left:1px solid #7E9C88;border-top:1px solid #7E9C88"></div>
<div class="a" style="left:96px;top:380px;width:73px;height:19px;background:#C8F2D6;border-left:1px solid #7E9C88;border-top:1px solid #7E9C88"></div>
<div class="a" style="left:169px;top:380px;width:59px;height:19px;background:#C8F2D6;border-left:1px solid #7E9C88;border-top:1px solid #7E9C88"></div>
<div class="a" style="left:228px;top:380px;width:48px;height:19px;background:#C8F2D6;border-left:1px solid #7E9C88;border-top:1px solid #7E9C88"></div>
<div class="a" style="left:276px;top:380px;width:219px;height:19px;background:#C8F2D6;border-left:1px solid #7E9C88;border-top:1px solid #7E9C88"></div>
<div class="a" style="left:495px;top:380px;width:63px;height:19px;background:#C8F2D6;border-left:1px solid #7E9C88;border-top:1px solid #7E9C88"></div>
<div class="a" style="left:558px;top:380px;width:83px;height:19px;background:#C8F2D6;border-left:1px solid #7E9C88;border-top:1px solid #7E9C88"></div>
<div class="a" style="left:641px;top:380px;width:122px;height:19px;background:#C8F2D6;border-left:1px solid #7E9C88;border-top:1px solid #7E9C88"></div>
<div class="a" style="left:763px;top:380px;width:67px;height:19px;background:#C8F2D6;border-left:1px solid #7E9C88;border-top:1px solid #7E9C88"></div>
<div class="a" style="left:830px;top:380px;width:46px;height:19px;background:#C8F2D6;border-left:1px solid #7E9C88;border-top:1px solid #7E9C88"></div>
<div class="t" style="left:6px;top:384px;font-size:12px">3</div>
<div class="t" style="left:42px;top:384px;font-size:12px">5200</div>
<div class="t" style="left:97px;top:384px;font-size:12px">30Jun2010</div>
<div class="t" style="left:170px;top:384px;font-size:12px">BUDGET</div>
<div class="t" style="left:229px;top:384px;font-size:12px">2010-3</div>
<div class="t" style="left:277px;top:384px;font-size:12px">Budget</div>
<div class="t" style="left:351px;top:384px;width:200px;text-align:right;font-size:12px">1,000.00</div>
<div class="t" style="left:436px;top:384px;width:200px;text-align:right;font-size:12px">3,000.00</div>
<div class="t" style="left:643px;top:384px;font-size:12px">BUDGET_BALANCE</div>
<div class="t" style="left:831px;top:384px;font-size:12px">budget</div>
<div class="a" style="left:4px;top:399px;width:37px;height:19px;background:#D6FFE6;border-left:1px solid #7E9C88;border-top:1px solid #7E9C88"></div>
<div class="a" style="left:41px;top:399px;width:55px;height:19px;background:#D6FFE6;border-left:1px solid #7E9C88;border-top:1px solid #7E9C88"></div>
<div class="a" style="left:96px;top:399px;width:73px;height:19px;background:#D6FFE6;border-left:1px solid #7E9C88;border-top:1px solid #7E9C88"></div>
<div class="a" style="left:169px;top:399px;width:59px;height:19px;background:#D6FFE6;border-left:1px solid #7E9C88;border-top:1px solid #7E9C88"></div>
<div class="a" style="left:228px;top:399px;width:48px;height:19px;background:#D6FFE6;border-left:1px solid #7E9C88;border-top:1px solid #7E9C88"></div>
<div class="a" style="left:276px;top:399px;width:219px;height:19px;background:#D6FFE6;border-left:1px solid #7E9C88;border-top:1px solid #7E9C88"></div>
<div class="a" style="left:495px;top:399px;width:63px;height:19px;background:#D6FFE6;border-left:1px solid #7E9C88;border-top:1px solid #7E9C88"></div>
<div class="a" style="left:558px;top:399px;width:83px;height:19px;background:#D6FFE6;border-left:1px solid #7E9C88;border-top:1px solid #7E9C88"></div>
<div class="a" style="left:641px;top:399px;width:122px;height:19px;background:#D6FFE6;border-left:1px solid #7E9C88;border-top:1px solid #7E9C88"></div>
<div class="a" style="left:763px;top:399px;width:67px;height:19px;background:#D6FFE6;border-left:1px solid #7E9C88;border-top:1px solid #7E9C88"></div>
<div class="a" style="left:830px;top:399px;width:46px;height:19px;background:#D6FFE6;border-left:1px solid #7E9C88;border-top:1px solid #7E9C88"></div>
<div class="t" style="left:6px;top:403px;font-size:12px">4</div>
<div class="t" style="left:42px;top:403px;font-size:12px">5200</div>
<div class="t" style="left:97px;top:403px;font-size:12px">31Jul2010</div>
<div class="t" style="left:170px;top:403px;font-size:12px">BUDGET</div>
<div class="t" style="left:229px;top:403px;font-size:12px">2010-4</div>
<div class="t" style="left:277px;top:403px;font-size:12px">Budget</div>
<div class="t" style="left:351px;top:403px;width:200px;text-align:right;font-size:12px">1,000.00</div>
<div class="t" style="left:436px;top:403px;width:200px;text-align:right;font-size:12px">4,000.00</div>
<div class="t" style="left:643px;top:403px;font-size:12px">BUDGET_BALANCE</div>
<div class="t" style="left:831px;top:403px;font-size:12px">budget</div>
<div class="a" style="left:4px;top:418px;width:37px;height:19px;background:#C8F2D6;border-left:1px solid #7E9C88;border-top:1px solid #7E9C88"></div>
<div class="a" style="left:41px;top:418px;width:55px;height:19px;background:#C8F2D6;border-left:1px solid #7E9C88;border-top:1px solid #7E9C88"></div>
<div class="a" style="left:96px;top:418px;width:73px;height:19px;background:#C8F2D6;border-left:1px solid #7E9C88;border-top:1px solid #7E9C88"></div>
<div class="a" style="left:169px;top:418px;width:59px;height:19px;background:#C8F2D6;border-left:1px solid #7E9C88;border-top:1px solid #7E9C88"></div>
<div class="a" style="left:228px;top:418px;width:48px;height:19px;background:#C8F2D6;border-left:1px solid #7E9C88;border-top:1px solid #7E9C88"></div>
<div class="a" style="left:276px;top:418px;width:219px;height:19px;background:#C8F2D6;border-left:1px solid #7E9C88;border-top:1px solid #7E9C88"></div>
<div class="a" style="left:495px;top:418px;width:63px;height:19px;background:#C8F2D6;border-left:1px solid #7E9C88;border-top:1px solid #7E9C88"></div>
<div class="a" style="left:558px;top:418px;width:83px;height:19px;background:#C8F2D6;border-left:1px solid #7E9C88;border-top:1px solid #7E9C88"></div>
<div class="a" style="left:641px;top:418px;width:122px;height:19px;background:#C8F2D6;border-left:1px solid #7E9C88;border-top:1px solid #7E9C88"></div>
<div class="a" style="left:763px;top:418px;width:67px;height:19px;background:#C8F2D6;border-left:1px solid #7E9C88;border-top:1px solid #7E9C88"></div>
<div class="a" style="left:830px;top:418px;width:46px;height:19px;background:#C8F2D6;border-left:1px solid #7E9C88;border-top:1px solid #7E9C88"></div>
<div class="t" style="left:6px;top:422px;font-size:12px">5</div>
<div class="t" style="left:42px;top:422px;font-size:12px">5200</div>
<div class="t" style="left:97px;top:422px;font-size:12px">31Aug2010</div>
<div class="t" style="left:170px;top:422px;font-size:12px">BUDGET</div>
<div class="t" style="left:277px;top:422px;font-size:12px">Budget</div>
<div class="t" style="left:351px;top:422px;width:200px;text-align:right;font-size:12px">1,000.00</div>
<div class="t" style="left:436px;top:422px;width:200px;text-align:right;font-size:12px">5,000.00</div>
<div class="t" style="left:643px;top:422px;font-size:12px">BUDGET_BALANCE</div>
<div class="t" style="left:831px;top:422px;font-size:12px">budget</div>
<div class="a" style="left:4px;top:437px;width:37px;height:19px;background:#D6FFE6;border-left:1px solid #7E9C88;border-top:1px solid #7E9C88"></div>
<div class="a" style="left:41px;top:437px;width:55px;height:19px;background:#D6FFE6;border-left:1px solid #7E9C88;border-top:1px solid #7E9C88"></div>
<div class="a" style="left:96px;top:437px;width:73px;height:19px;background:#D6FFE6;border-left:1px solid #7E9C88;border-top:1px solid #7E9C88"></div>
<div class="a" style="left:169px;top:437px;width:59px;height:19px;background:#D6FFE6;border-left:1px solid #7E9C88;border-top:1px solid #7E9C88"></div>
<div class="a" style="left:228px;top:437px;width:48px;height:19px;background:#D6FFE6;border-left:1px solid #7E9C88;border-top:1px solid #7E9C88"></div>
<div class="a" style="left:276px;top:437px;width:219px;height:19px;background:#D6FFE6;border-left:1px solid #7E9C88;border-top:1px solid #7E9C88"></div>
<div class="a" style="left:495px;top:437px;width:63px;height:19px;background:#D6FFE6;border-left:1px solid #7E9C88;border-top:1px solid #7E9C88"></div>
<div class="a" style="left:558px;top:437px;width:83px;height:19px;background:#D6FFE6;border-left:1px solid #7E9C88;border-top:1px solid #7E9C88"></div>
<div class="a" style="left:641px;top:437px;width:122px;height:19px;background:#D6FFE6;border-left:1px solid #7E9C88;border-top:1px solid #7E9C88"></div>
<div class="a" style="left:763px;top:437px;width:67px;height:19px;background:#D6FFE6;border-left:1px solid #7E9C88;border-top:1px solid #7E9C88"></div>
<div class="a" style="left:830px;top:437px;width:46px;height:19px;background:#D6FFE6;border-left:1px solid #7E9C88;border-top:1px solid #7E9C88"></div>
<div class="t" style="left:6px;top:441px;font-size:12px">6</div>
<div class="t" style="left:42px;top:441px;font-size:12px">5200</div>
<div class="t" style="left:97px;top:441px;font-size:12px">30Sep2010</div>
<div class="t" style="left:170px;top:441px;font-size:12px">BUDGET</div>
<div class="t" style="left:277px;top:441px;font-size:12px">Budget</div>
<div class="t" style="left:351px;top:441px;width:200px;text-align:right;font-size:12px">1,000.00</div>
<div class="t" style="left:436px;top:441px;width:200px;text-align:right;font-size:12px">6,000.00</div>
<div class="t" style="left:643px;top:441px;font-size:12px">BUDGET_BALANCE</div>
<div class="t" style="left:831px;top:441px;font-size:12px">budget</div>
<div class="a" style="left:4px;top:456px;width:37px;height:19px;background:#C8F2D6;border-left:1px solid #7E9C88;border-top:1px solid #7E9C88"></div>
<div class="a" style="left:41px;top:456px;width:55px;height:19px;background:#C8F2D6;border-left:1px solid #7E9C88;border-top:1px solid #7E9C88"></div>
<div class="a" style="left:96px;top:456px;width:73px;height:19px;background:#C8F2D6;border-left:1px solid #7E9C88;border-top:1px solid #7E9C88"></div>
<div class="a" style="left:169px;top:456px;width:59px;height:19px;background:#C8F2D6;border-left:1px solid #7E9C88;border-top:1px solid #7E9C88"></div>
<div class="a" style="left:228px;top:456px;width:48px;height:19px;background:#C8F2D6;border-left:1px solid #7E9C88;border-top:1px solid #7E9C88"></div>
<div class="a" style="left:276px;top:456px;width:219px;height:19px;background:#C8F2D6;border-left:1px solid #7E9C88;border-top:1px solid #7E9C88"></div>
<div class="a" style="left:495px;top:456px;width:63px;height:19px;background:#C8F2D6;border-left:1px solid #7E9C88;border-top:1px solid #7E9C88"></div>
<div class="a" style="left:558px;top:456px;width:83px;height:19px;background:#C8F2D6;border-left:1px solid #7E9C88;border-top:1px solid #7E9C88"></div>
<div class="a" style="left:641px;top:456px;width:122px;height:19px;background:#C8F2D6;border-left:1px solid #7E9C88;border-top:1px solid #7E9C88"></div>
<div class="a" style="left:763px;top:456px;width:67px;height:19px;background:#C8F2D6;border-left:1px solid #7E9C88;border-top:1px solid #7E9C88"></div>
<div class="a" style="left:830px;top:456px;width:46px;height:19px;background:#C8F2D6;border-left:1px solid #7E9C88;border-top:1px solid #7E9C88"></div>
<div class="t" style="left:6px;top:460px;font-size:12px">7</div>
<div class="t" style="left:42px;top:460px;font-size:12px">5200</div>
<div class="t" style="left:97px;top:460px;font-size:12px">31Oct2010</div>
<div class="t" style="left:170px;top:460px;font-size:12px">BUDGET</div>
<div class="t" style="left:277px;top:460px;font-size:12px">Budget</div>
<div class="t" style="left:351px;top:460px;width:200px;text-align:right;font-size:12px">1,000.00</div>
<div class="t" style="left:436px;top:460px;width:200px;text-align:right;font-size:12px">7,000.00</div>
<div class="t" style="left:643px;top:460px;font-size:12px">BUDGET_BALANCE</div>
<div class="t" style="left:831px;top:460px;font-size:12px">budget</div>
<div class="a" style="left:4px;top:475px;width:37px;height:19px;background:#D6FFE6;border-left:1px solid #7E9C88;border-top:1px solid #7E9C88"></div>
<div class="a" style="left:41px;top:475px;width:55px;height:19px;background:#D6FFE6;border-left:1px solid #7E9C88;border-top:1px solid #7E9C88"></div>
<div class="a" style="left:96px;top:475px;width:73px;height:19px;background:#D6FFE6;border-left:1px solid #7E9C88;border-top:1px solid #7E9C88"></div>
<div class="a" style="left:169px;top:475px;width:59px;height:19px;background:#D6FFE6;border-left:1px solid #7E9C88;border-top:1px solid #7E9C88"></div>
<div class="a" style="left:228px;top:475px;width:48px;height:19px;background:#D6FFE6;border-left:1px solid #7E9C88;border-top:1px solid #7E9C88"></div>
<div class="a" style="left:276px;top:475px;width:219px;height:19px;background:#D6FFE6;border-left:1px solid #7E9C88;border-top:1px solid #7E9C88"></div>
<div class="a" style="left:495px;top:475px;width:63px;height:19px;background:#D6FFE6;border-left:1px solid #7E9C88;border-top:1px solid #7E9C88"></div>
<div class="a" style="left:558px;top:475px;width:83px;height:19px;background:#D6FFE6;border-left:1px solid #7E9C88;border-top:1px solid #7E9C88"></div>
<div class="a" style="left:641px;top:475px;width:122px;height:19px;background:#D6FFE6;border-left:1px solid #7E9C88;border-top:1px solid #7E9C88"></div>
<div class="a" style="left:763px;top:475px;width:67px;height:19px;background:#D6FFE6;border-left:1px solid #7E9C88;border-top:1px solid #7E9C88"></div>
<div class="a" style="left:830px;top:475px;width:46px;height:19px;background:#D6FFE6;border-left:1px solid #7E9C88;border-top:1px solid #7E9C88"></div>
<div class="t" style="left:6px;top:479px;font-size:12px">8</div>
<div class="t" style="left:42px;top:479px;font-size:12px">5200</div>
<div class="t" style="left:97px;top:479px;font-size:12px">30Nov2010</div>
<div class="t" style="left:170px;top:479px;font-size:12px">BUDGET</div>
<div class="t" style="left:277px;top:479px;font-size:12px">Budget</div>
<div class="t" style="left:351px;top:479px;width:200px;text-align:right;font-size:12px">1,000.00</div>
<div class="t" style="left:436px;top:479px;width:200px;text-align:right;font-size:12px">8,000.00</div>
<div class="t" style="left:643px;top:479px;font-size:12px">BUDGET_BALANCE</div>
<div class="t" style="left:831px;top:479px;font-size:12px">budget</div>
<div class="a" style="left:4px;top:494px;width:37px;height:19px;background:#C8F2D6;border-left:1px solid #7E9C88;border-top:1px solid #7E9C88"></div>
<div class="a" style="left:41px;top:494px;width:55px;height:19px;background:#C8F2D6;border-left:1px solid #7E9C88;border-top:1px solid #7E9C88"></div>
<div class="a" style="left:96px;top:494px;width:73px;height:19px;background:#C8F2D6;border-left:1px solid #7E9C88;border-top:1px solid #7E9C88"></div>
<div class="a" style="left:169px;top:494px;width:59px;height:19px;background:#C8F2D6;border-left:1px solid #7E9C88;border-top:1px solid #7E9C88"></div>
<div class="a" style="left:228px;top:494px;width:48px;height:19px;background:#C8F2D6;border-left:1px solid #7E9C88;border-top:1px solid #7E9C88"></div>
<div class="a" style="left:276px;top:494px;width:219px;height:19px;background:#C8F2D6;border-left:1px solid #7E9C88;border-top:1px solid #7E9C88"></div>
<div class="a" style="left:495px;top:494px;width:63px;height:19px;background:#C8F2D6;border-left:1px solid #7E9C88;border-top:1px solid #7E9C88"></div>
<div class="a" style="left:558px;top:494px;width:83px;height:19px;background:#C8F2D6;border-left:1px solid #7E9C88;border-top:1px solid #7E9C88"></div>
<div class="a" style="left:641px;top:494px;width:122px;height:19px;background:#C8F2D6;border-left:1px solid #7E9C88;border-top:1px solid #7E9C88"></div>
<div class="a" style="left:763px;top:494px;width:67px;height:19px;background:#C8F2D6;border-left:1px solid #7E9C88;border-top:1px solid #7E9C88"></div>
<div class="a" style="left:830px;top:494px;width:46px;height:19px;background:#C8F2D6;border-left:1px solid #7E9C88;border-top:1px solid #7E9C88"></div>
<div class="t" style="left:6px;top:498px;font-size:12px">9</div>
<div class="t" style="left:42px;top:498px;font-size:12px">5200</div>
<div class="t" style="left:97px;top:498px;font-size:12px">31Dec2010</div>
<div class="t" style="left:170px;top:498px;font-size:12px">BUDGET</div>
<div class="t" style="left:277px;top:498px;font-size:12px">Budget</div>
<div class="t" style="left:351px;top:498px;width:200px;text-align:right;font-size:12px">1,000.00</div>
<div class="t" style="left:436px;top:498px;width:200px;text-align:right;font-size:12px">9,000.00</div>
<div class="t" style="left:643px;top:498px;font-size:12px">BUDGET_BALANCE</div>
<div class="t" style="left:831px;top:498px;font-size:12px">budget</div>
<div class="a" style="left:4px;top:513px;width:37px;height:19px;background:#D6FFE6;border-left:1px solid #7E9C88;border-top:1px solid #7E9C88"></div>
<div class="a" style="left:41px;top:513px;width:55px;height:19px;background:#D6FFE6;border-left:1px solid #7E9C88;border-top:1px solid #7E9C88"></div>
<div class="a" style="left:96px;top:513px;width:73px;height:19px;background:#D6FFE6;border-left:1px solid #7E9C88;border-top:1px solid #7E9C88"></div>
<div class="a" style="left:169px;top:513px;width:59px;height:19px;background:#D6FFE6;border-left:1px solid #7E9C88;border-top:1px solid #7E9C88"></div>
<div class="a" style="left:228px;top:513px;width:48px;height:19px;background:#D6FFE6;border-left:1px solid #7E9C88;border-top:1px solid #7E9C88"></div>
<div class="a" style="left:276px;top:513px;width:219px;height:19px;background:#D6FFE6;border-left:1px solid #7E9C88;border-top:1px solid #7E9C88"></div>
<div class="a" style="left:495px;top:513px;width:63px;height:19px;background:#D6FFE6;border-left:1px solid #7E9C88;border-top:1px solid #7E9C88"></div>
<div class="a" style="left:558px;top:513px;width:83px;height:19px;background:#D6FFE6;border-left:1px solid #7E9C88;border-top:1px solid #7E9C88"></div>
<div class="a" style="left:641px;top:513px;width:122px;height:19px;background:#D6FFE6;border-left:1px solid #7E9C88;border-top:1px solid #7E9C88"></div>
<div class="a" style="left:763px;top:513px;width:67px;height:19px;background:#D6FFE6;border-left:1px solid #7E9C88;border-top:1px solid #7E9C88"></div>
<div class="a" style="left:830px;top:513px;width:46px;height:19px;background:#D6FFE6;border-left:1px solid #7E9C88;border-top:1px solid #7E9C88"></div>
<div class="t" style="left:6px;top:517px;font-size:12px">10</div>
<div class="t" style="left:42px;top:517px;font-size:12px">5200</div>
<div class="t" style="left:97px;top:517px;font-size:12px">31Jan2011</div>
<div class="t" style="left:170px;top:517px;font-size:12px">BUDGET</div>
<div class="t" style="left:277px;top:517px;font-size:12px">Budget</div>
<div class="t" style="left:351px;top:517px;width:200px;text-align:right;font-size:12px">1,000.00</div>
<div class="t" style="left:436px;top:517px;width:200px;text-align:right;font-size:12px">10,000.00</div>
<div class="t" style="left:643px;top:517px;font-size:12px">BUDGET_BALANCE</div>
<div class="t" style="left:831px;top:517px;font-size:12px">budget</div>
<div class="a" style="left:4px;top:532px;width:37px;height:19px;background:#C8F2D6;border-left:1px solid #7E9C88;border-top:1px solid #7E9C88"></div>
<div class="a" style="left:41px;top:532px;width:55px;height:19px;background:#C8F2D6;border-left:1px solid #7E9C88;border-top:1px solid #7E9C88"></div>
<div class="a" style="left:96px;top:532px;width:73px;height:19px;background:#C8F2D6;border-left:1px solid #7E9C88;border-top:1px solid #7E9C88"></div>
<div class="a" style="left:169px;top:532px;width:59px;height:19px;background:#C8F2D6;border-left:1px solid #7E9C88;border-top:1px solid #7E9C88"></div>
<div class="a" style="left:228px;top:532px;width:48px;height:19px;background:#C8F2D6;border-left:1px solid #7E9C88;border-top:1px solid #7E9C88"></div>
<div class="a" style="left:276px;top:532px;width:219px;height:19px;background:#C8F2D6;border-left:1px solid #7E9C88;border-top:1px solid #7E9C88"></div>
<div class="a" style="left:495px;top:532px;width:63px;height:19px;background:#C8F2D6;border-left:1px solid #7E9C88;border-top:1px solid #7E9C88"></div>
<div class="a" style="left:558px;top:532px;width:83px;height:19px;background:#C8F2D6;border-left:1px solid #7E9C88;border-top:1px solid #7E9C88"></div>
<div class="a" style="left:641px;top:532px;width:122px;height:19px;background:#C8F2D6;border-left:1px solid #7E9C88;border-top:1px solid #7E9C88"></div>
<div class="a" style="left:763px;top:532px;width:67px;height:19px;background:#C8F2D6;border-left:1px solid #7E9C88;border-top:1px solid #7E9C88"></div>
<div class="a" style="left:830px;top:532px;width:46px;height:19px;background:#C8F2D6;border-left:1px solid #7E9C88;border-top:1px solid #7E9C88"></div>
<div class="t" style="left:6px;top:536px;font-size:12px">11</div>
<div class="t" style="left:42px;top:536px;font-size:12px">5200</div>
<div class="t" style="left:97px;top:536px;font-size:12px">28Feb2011</div>
<div class="t" style="left:170px;top:536px;font-size:12px">BUDGET</div>
<div class="t" style="left:277px;top:536px;font-size:12px">Budget</div>
<div class="t" style="left:351px;top:536px;width:200px;text-align:right;font-size:12px">1,000.00</div>
<div class="t" style="left:436px;top:536px;width:200px;text-align:right;font-size:12px">11,000.00</div>
<div class="t" style="left:643px;top:536px;font-size:12px">BUDGET_BALANCE</div>
<div class="t" style="left:831px;top:536px;font-size:12px">budget</div>
<div class="a" style="left:4px;top:551px;width:37px;height:19px;background:#D6FFE6;border-left:1px solid #7E9C88;border-top:1px solid #7E9C88"></div>
<div class="a" style="left:41px;top:551px;width:55px;height:19px;background:#D6FFE6;border-left:1px solid #7E9C88;border-top:1px solid #7E9C88"></div>
<div class="a" style="left:96px;top:551px;width:73px;height:19px;background:#D6FFE6;border-left:1px solid #7E9C88;border-top:1px solid #7E9C88"></div>
<div class="a" style="left:169px;top:551px;width:59px;height:19px;background:#D6FFE6;border-left:1px solid #7E9C88;border-top:1px solid #7E9C88"></div>
<div class="a" style="left:228px;top:551px;width:48px;height:19px;background:#D6FFE6;border-left:1px solid #7E9C88;border-top:1px solid #7E9C88"></div>
<div class="a" style="left:276px;top:551px;width:219px;height:19px;background:#D6FFE6;border-left:1px solid #7E9C88;border-top:1px solid #7E9C88"></div>
<div class="a" style="left:495px;top:551px;width:63px;height:19px;background:#D6FFE6;border-left:1px solid #7E9C88;border-top:1px solid #7E9C88"></div>
<div class="a" style="left:558px;top:551px;width:83px;height:19px;background:#D6FFE6;border-left:1px solid #7E9C88;border-top:1px solid #7E9C88"></div>
<div class="a" style="left:641px;top:551px;width:122px;height:19px;background:#D6FFE6;border-left:1px solid #7E9C88;border-top:1px solid #7E9C88"></div>
<div class="a" style="left:763px;top:551px;width:67px;height:19px;background:#D6FFE6;border-left:1px solid #7E9C88;border-top:1px solid #7E9C88"></div>
<div class="a" style="left:830px;top:551px;width:46px;height:19px;background:#D6FFE6;border-left:1px solid #7E9C88;border-top:1px solid #7E9C88"></div>
<div class="t" style="left:6px;top:555px;font-size:12px">12</div>
<div class="t" style="left:42px;top:555px;font-size:12px">5200</div>
<div class="t" style="left:97px;top:555px;font-size:12px">31Mar2011</div>
<div class="t" style="left:170px;top:555px;font-size:12px">BUDGET</div>
<div class="t" style="left:277px;top:555px;font-size:12px">Budget</div>
<div class="t" style="left:351px;top:555px;width:200px;text-align:right;font-size:12px">1,000.00</div>
<div class="t" style="left:436px;top:555px;width:200px;text-align:right;font-size:12px">12,000.00</div>
<div class="t" style="left:643px;top:555px;font-size:12px">BUDGET_BALANCE</div>
<div class="t" style="left:831px;top:555px;font-size:12px">budget</div>
</body></html>
